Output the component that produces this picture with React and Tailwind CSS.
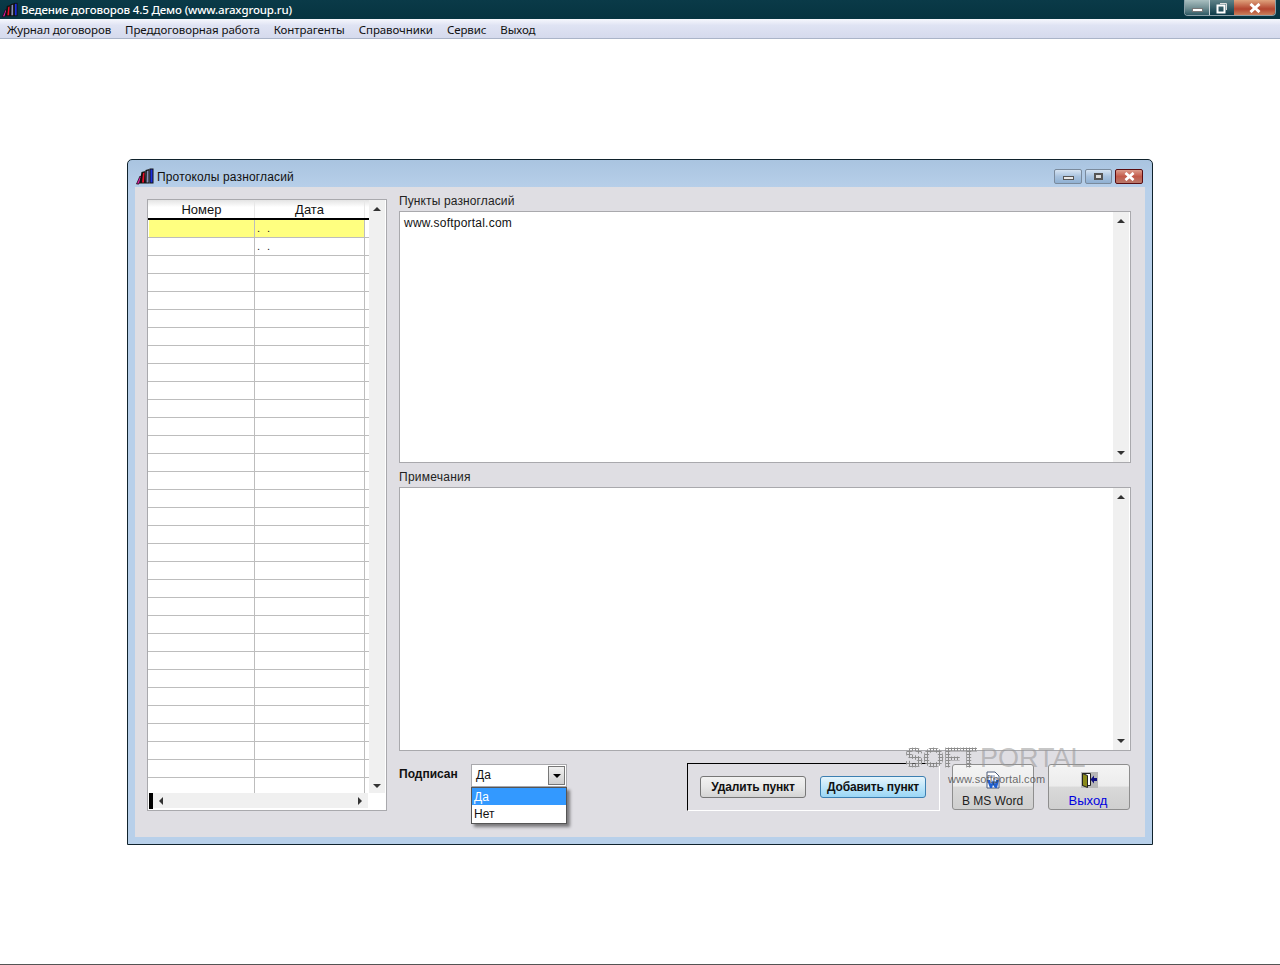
import React from "react";

const Books = ({ className }) => (
  <svg viewBox="0 0 18 17" className={className}>
    <path d="M0.500 16 L4 8 L5.500 9 L3 16 Z" fill="#e020a0" stroke="#000" strokeWidth="0.7" />
    <path d="M3.500 15.500 L5.500 4 L9.500 3 L9 15.500 Z" fill="#111" />
    <path d="M6 14.500 L7 5 L8.500 4.500 L8 14.500 Z" fill="#e8102a" />
    <path d="M9 15.500 L9.500 2 L13.500 1 L13.500 15.500 Z" fill="#111" />
    <path d="M10.500 14.500 L10.800 3 L12.500 2.500 L12.500 14.500 Z" fill="#8a90b8" />
    <path d="M13.500 15.500 L13.500 0.500 L17.500 0.500 L17.500 15.500 Z" fill="#111" />
    <path d="M14.500 14.500 L14.500 1.500 L16.500 1.500 L16.500 14.500 Z" fill="#1c2fe0" />
  </svg>
);

const Up = () => <div className="w-0 h-0 border-x-[4px] border-x-transparent border-b-[4px] border-b-[#333]" />;
const Down = () => <div className="w-0 h-0 border-x-[4px] border-x-transparent border-t-[4px] border-t-[#333]" />;
const Left = () => <div className="w-0 h-0 border-y-[4px] border-y-transparent border-r-[4px] border-r-[#333]" />;
const Right = () => <div className="w-0 h-0 border-y-[4px] border-y-transparent border-l-[4px] border-l-[#333]" />;

const Cross = ({ w = 12, h = 10, sw = 3 }) => (
  <svg width={w} height={h} viewBox="0 0 12 10">
    <path d="M1.500 1 L10.500 9 M10.500 1 L1.500 9" stroke="#fff" strokeWidth={sw} fill="none" />
  </svg>
);

const menu = ["Журнал договоров", "Преддоговорная работа", "Контрагенты", "Справочники", "Сервис", "Выход"];
const rows = Array.from({ length: 32 }, (_, i) => i);

function Memo({ height, text }) {
  return (
    <div className="flex bg-white border border-[#a9a9ad]" style={{ height }}>
      <div className="flex-1 pl-[4px] pt-[3px] text-[12px] leading-[16px] tracking-[0.22px] text-[#111]">{text}</div>
      <div className="w-[16px] bg-[#f0f0f0] flex flex-col items-center justify-between py-[7px] mr-[1px]">
        <Up />
        <Down />
      </div>
    </div>
  );
}

function BigButton({ label, icon, blue }) {
  return (
    <div className="w-[82px] h-[46px] rounded-[3px] border border-[#8e8e8e] bg-[linear-gradient(#f4f4f4_0%,#ececec_48%,#d9d9d9_50%,#cfcfcf_100%)] flex flex-col items-center pt-[6px]">
      <div className="h-[18px] flex items-center">{icon}</div>
      <div className={`mt-[4px] leading-[16px] ${blue ? "text-[13px] text-[#0000e0] -ml-[2px]" : "text-[12px] text-[#222] -ml-[1px]"}`}>{label}</div>
    </div>
  );
}

export default function App() {
  return (
    <div className="w-[1280px] h-[965px] overflow-hidden bg-white flex flex-col font-['Liberation_Sans',sans-serif] relative">
      {/* App title bar */}
      <div className="h-[19px] bg-[linear-gradient(#0a3a48,#063440)] flex items-center relative shrink-0">
        <Books className="w-[16px] h-[16px] ml-[2px] mt-[1px]" />
        <div className="ml-[3px] text-white text-[11.5px] font-['Noto_Sans',sans-serif] font-medium leading-[16px] tracking-[-0.15px]">
          Ведение договоров 4.5 Демо (www.araxgroup.ru)
        </div>
        <div className="absolute left-[1184px] top-0 w-[92px] h-[16px] flex rounded-b-[4px] border border-t-0 border-[#8aa0a8] overflow-hidden">
          <div className="w-[25px] bg-[linear-gradient(#a9bfc0,#6f8d92_55%,#2f5a64)] flex items-center justify-center border-r border-[#c8d4d8]">
            <div className="w-[11px] h-[4px] mt-[4px] bg-white border border-[#777]" />
          </div>
          <div className="w-[24px] bg-[linear-gradient(#5f8288,#0c3a48)] flex items-center justify-center">
            <svg width="12" height="12" viewBox="0 0 12 12">
              <path d="M4 1.500h6.500V8" fill="none" stroke="#ddd" />
              <rect x="1.500" y="3.500" width="7" height="7" fill="none" stroke="#fff" strokeWidth="2" />
            </svg>
          </div>
          <div className="flex-1 bg-[linear-gradient(#dfa27c,#b3452f_60%,#c9805a)] flex items-center justify-center">
            <Cross />
          </div>
        </div>
      </div>
      {/* Menu */}
      <div className="h-[20px] shrink-0 border-t border-[#f4f6fb] border-b border-b-[#aab4c8] bg-[linear-gradient(#f2f4fb_0%,#dfe3f3_30%,#d5daed_100%)] flex items-center pl-[7px] gap-[14px] text-[11.5px] text-[#111] font-['Noto_Sans',sans-serif]">
        {menu.map((m) => (
          <span key={m} className="leading-[16px] mt-[1px] tracking-[-0.09px]">{m}</span>
        ))}
      </div>

      {/* Dialog */}
      <div className="pl-[127px] pt-[120px] flex-1">
        <div className="w-[1026px] h-[686px] border border-[#10222c] rounded-t-[5px] bg-[linear-gradient(#a9c4e0,#b8d0ea_30px)] flex flex-col">
          <div className="h-[27px] shrink-0 flex items-center pl-[8px] relative">
            <Books className="w-[18px] h-[17px] mt-[6px]" />
            <div className="ml-[3px] mt-[6px] text-[12px] text-[#111] tracking-[0.15px]">Протоколы разногласий</div>
            <div className="absolute right-[9px] top-[9px] flex gap-[3px]">
              <div className="w-[28px] h-[15px] rounded-[2px] border border-[#7a8a9c] bg-[linear-gradient(#d7e4f2,#a8c2de_50%,#8fb0d2)] flex items-center justify-center">
                <div className="w-[11px] h-[4px] mt-[3px] bg-[#e8e8e8] border border-[#555]" />
              </div>
              <div className="w-[27px] h-[15px] rounded-[2px] border border-[#7a8a9c] bg-[linear-gradient(#d7e4f2,#a8c2de_50%,#8fb0d2)] flex items-center justify-center">
                <div className="w-[9px] h-[7px] border-2 border-[#555] bg-[#ddd]" />
              </div>
              <div className="w-[28px] h-[15px] rounded-[2px] border border-[#5a0c10] bg-[linear-gradient(#dd9c8c,#c25a4a_50%,#b9786a)] flex items-center justify-center">
                <Cross w={11} h={9} />
              </div>
            </div>
          </div>

          <div className="w-[1010px] h-[650px] ml-[7px] bg-[#dfdee3] flex pl-[12px] pt-[12px] relative">
            {/* Grid */}
            <div className="w-[240px] h-[612px] border border-[#a9a9ad] bg-white flex flex-col shrink-0">
              <div className="flex flex-1 min-h-0">
                <div className="w-[221px] flex flex-col">
                  <div className="h-[20px] shrink-0 flex border-b-2 border-black bg-[linear-gradient(#e4e4e4,#ffffff_40%)] text-[13px] text-[#111]">
                    <div className="w-[107px] pl-[1px] text-center leading-[19px] border-r border-[#e8e8e8]">Номер</div>
                    <div className="w-[110px] text-center leading-[19px] border-r border-[#e8e8e8]">Дата</div>
                  </div>
                  <div className="flex-1 min-h-0 overflow-hidden">
                    {rows.map((i) => (
                      <div key={i} className="h-[18px] flex border-b border-[#bdbdbd]">
                        <div className={`w-[106px] border-r border-[#bdbdbd] ml-[1px] ${i === 0 ? "bg-[#ffff80]" : ""}`} />
                        <div className={`w-[110px] border-r border-[#bdbdbd] pl-[2px] text-[11px] leading-[17px] tracking-[2px] text-[#222] ${i === 0 ? "bg-[#ffff80]" : ""}`}>
                          {i < 2 ? ". ." : ""}
                        </div>
                        <div className="flex-1" />
                      </div>
                    ))}
                  </div>
                </div>
                <div className="w-[16px] bg-[#f0f0f0] flex flex-col items-center justify-between pt-[7px] pb-[5px]">
                  <Up />
                  <Down />
                </div>
              </div>
              <div className="h-[17px] shrink-0 flex">
                <div className="w-[4px] ml-[1px] h-[16px] bg-black" />
                <div className="w-[215px] h-[15px] bg-[#f0f0f0] flex items-center justify-between px-[6px]">
                  <Left />
                  <Right />
                </div>
              </div>
            </div>

            {/* Right */}
            <div className="ml-[12px] w-[732px] flex flex-col -mt-[6px]">
              <div className="h-[18px] text-[12px] leading-[16px] text-[#222] tracking-[0.12px]">Пункты разногласий</div>
              <Memo height={252} text="www.softportal.com" />
              <div className="h-[24px] pt-[6px] text-[12px] leading-[16px] text-[#222] tracking-[0.25px]">Примечания</div>
              <Memo height={264} text="" />

              <div className="flex mt-[13px] relative">
                <div className="w-[72px] pt-[2px] text-[12px] leading-[16px] font-bold text-[#111]">Подписан</div>
                <div className="relative w-[96px] h-[23px] bg-white border border-[#a9a9ad] flex items-center justify-between pl-[4px] pr-[1px] text-[12px] text-[#111]">
                  <span className="-mt-[2px]">Да</span>
                  <div className="w-[17px] h-[19px] border border-[#777] bg-[linear-gradient(#f0f0f0,#cfcfcf)] flex items-center justify-center">
                    <div className="w-0 h-0 border-x-[4px] border-x-transparent border-t-[4px] border-t-black" />
                  </div>
                  <div className="absolute left-[-1px] top-[22px] w-[96px] h-[37px] bg-white border border-[#555] shadow-[3px_3px_3px_rgba(0,0,0,0.45)] text-[12px] leading-[18px] z-10">
                    <div className="h-[17px] bg-[#3399ff] text-white pl-[2px]">Да</div>
                    <div className="h-[17px] text-[#111] pl-[2px]">Нет</div>
                  </div>
                </div>
                <div className="ml-[120px] w-[253px] h-[48px] border-l border-t border-l-black border-t-black border-r border-b border-r-white border-b-white flex items-center pl-[12px] gap-[14px] mt-[-1px]">
                  <div className="w-[106px] h-[22px] rounded-[3px] border border-[#777] bg-[linear-gradient(#f2f2f2,#e8e8e8_48%,#d4d4d4)] text-center text-[12px] leading-[20px] font-bold tracking-[-0.18px] text-[#111]">Удалить пункт</div>
                  <div className="w-[106px] h-[22px] rounded-[3px] border border-[#3c7fb1] bg-[linear-gradient(#e6f5fc,#bfe6fa_50%,#9ad6f5)] text-center text-[12px] leading-[20px] font-bold tracking-[-0.18px] text-[#111]">Добавить пункт</div>
                </div>
                <div className="ml-[12px] flex gap-[14px]">
                  <BigButton
                    label="В MS Word"
                    icon={
                      <svg width="16" height="18" viewBox="0 0 16 18">
                        <path d="M2 1h8l4 4v12H2z" fill="#fff" stroke="#4a5a7a" />
                        <path d="M4 5h6M8 8h4M9 11h3" stroke="#7a8ab0" />
                        <path d="M2 9l3 8h2l1-3 2 3h2l2-8h-3l-1 4-2-4-2 4-1-4z" fill="#1f5fd0" />
                      </svg>
                    }
                  />
                  <BigButton
                    blue
                    label="Выход"
                    icon={
                      <svg width="17" height="16" viewBox="0 0 17 16">
                        <rect x="0" y="0" width="17" height="16" fill="#b8b8b8" />
                        <path d="M1.500 1.500h8v12h-8z" fill="#fff" stroke="#222" />
                        <path d="M1.500 1.500l5 2v12l-5-2z" fill="#8a8a1a" stroke="#222" />
                        <path d="M16 6h-3V3.500L9.500 7.500l3.500 4V9h3z" fill="#101080" />
                      </svg>
                    }
                  />
                </div>
              </div>
            </div>
          </div>
        </div>
      </div>

      {/* Bottom line */}
      <div className="absolute left-0 right-0 bottom-0 h-px bg-[#555]" />

      {/* Watermark */}
      <div className="absolute left-[905px] top-[741px] flex items-center text-[27px] leading-[34px] pointer-events-none">
        <span className="font-bold [-webkit-text-stroke:1px_transparent] bg-[radial-gradient(circle,#8c8c8c_1.1px,transparent_1.1px)] bg-[size:3px_3px] bg-clip-text text-transparent">SOFT</span>
        <span className="ml-[3px] text-[rgba(150,150,150,0.55)]">PORTAL</span>
      </div>
      <div className="absolute left-[948px] top-[772px] text-[11px] tracking-[0.1px] leading-[14px] text-[rgba(70,70,70,0.8)] pointer-events-none">www.softportal.com</div>
    </div>
  );
}
